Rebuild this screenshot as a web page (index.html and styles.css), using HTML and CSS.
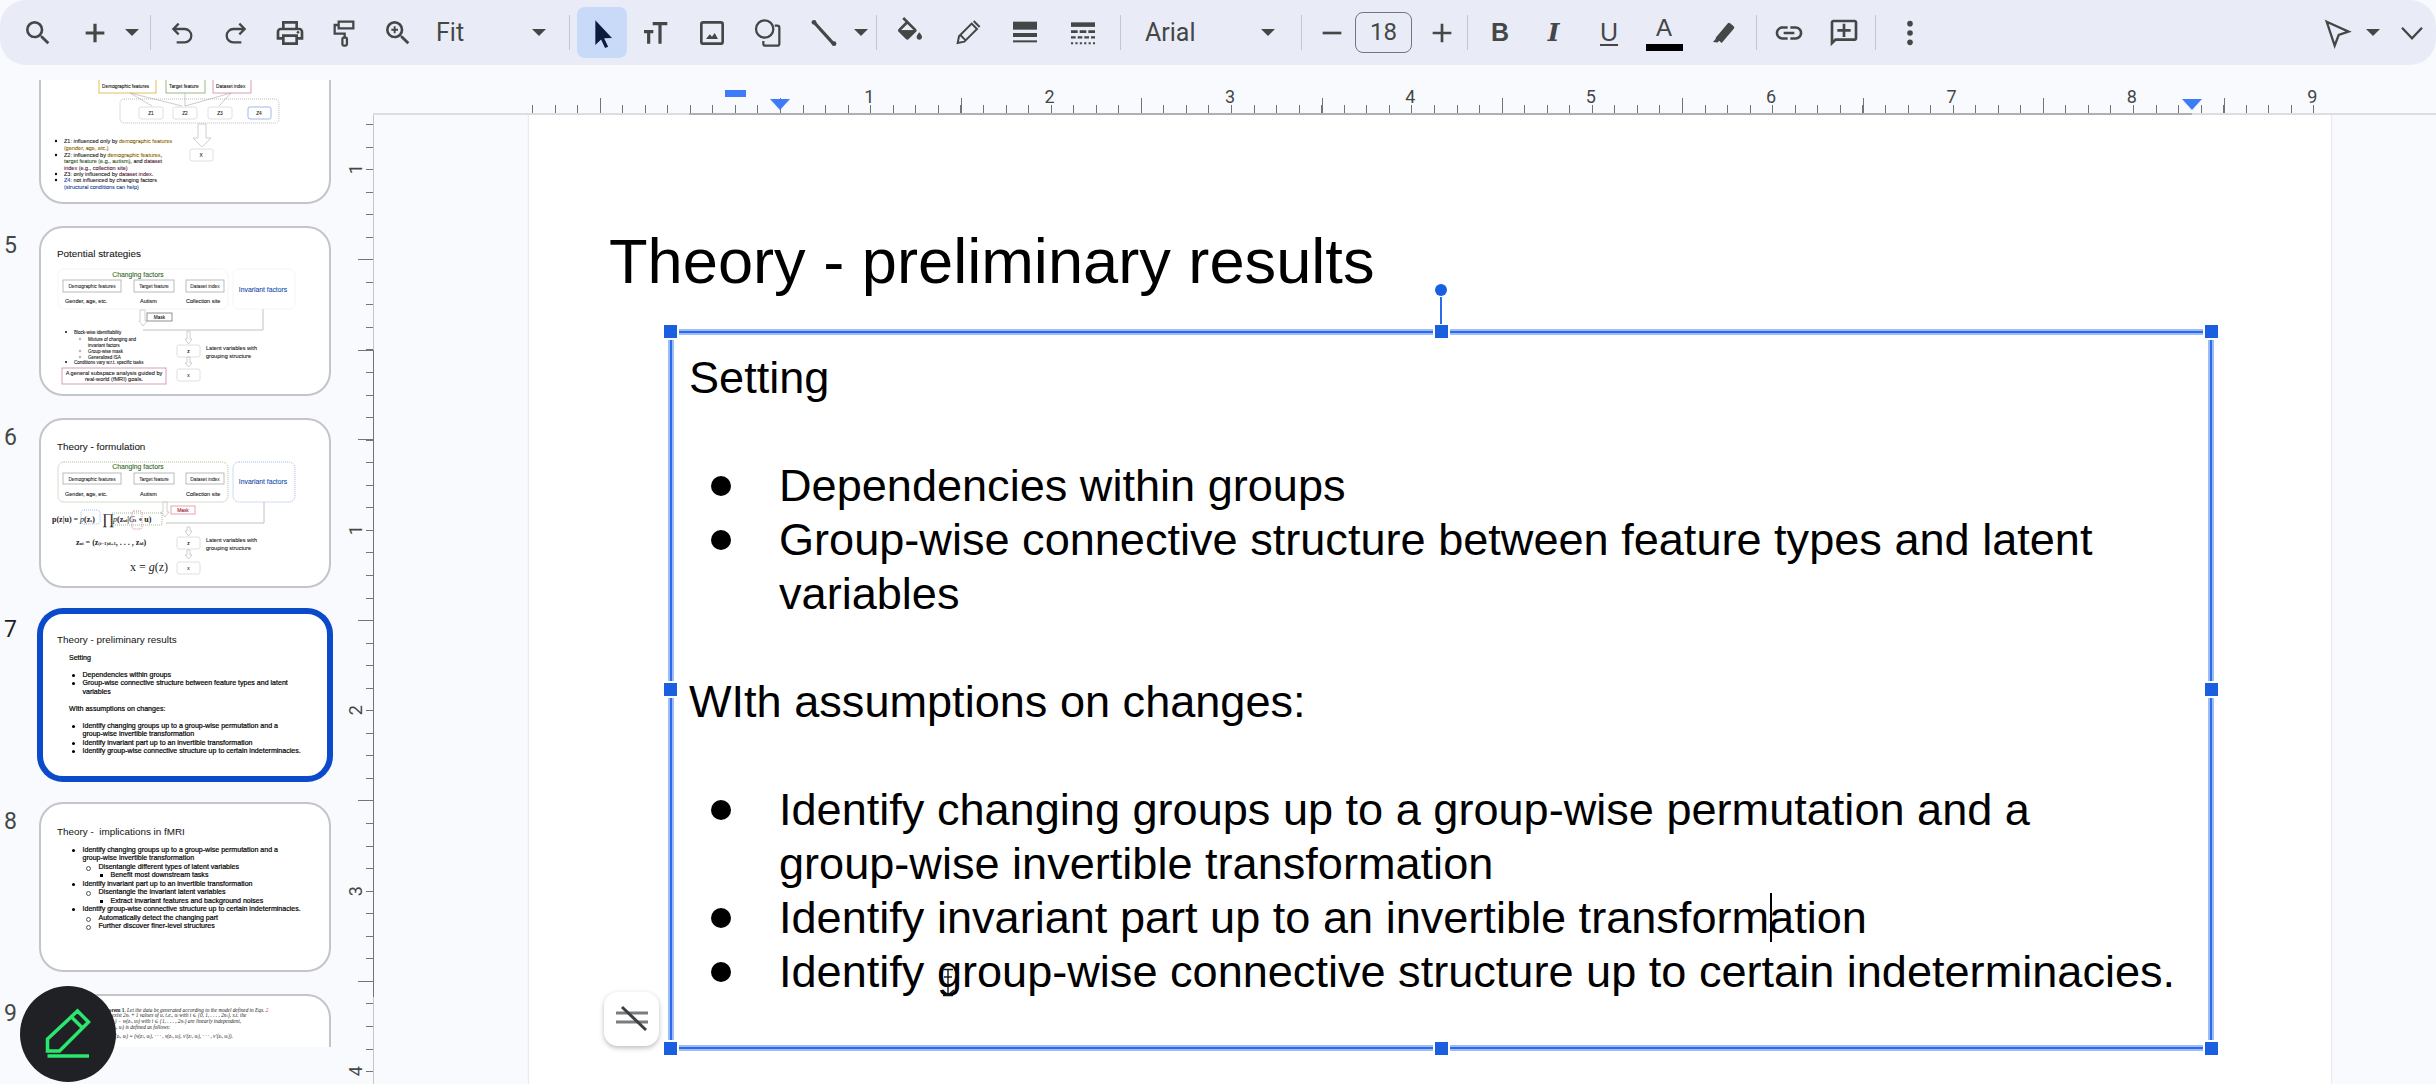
FILE: index.html
```html
<!DOCTYPE html>
<html lang="en">
<head>
    <meta charset="UTF-8">
    <title>Theory - preliminary results</title>
    <link rel="stylesheet" href="styles.css">
</head>
<body>
<div class="app">
    <!-- toolbar -->
    <div class="toolbar">
        <div class="btn w54"><svg class="ico" viewBox="0 0 24 24"><path d="M15.5 14h-.79l-.28-.27A6.471 6.471 0 0 0 16 9.5 6.5 6.5 0 1 0 9.5 16c1.61 0 3.09-.59 4.23-1.57l.27.28v.79l5 4.99L20.49 19l-4.99-5zm-6 0C7.01 14 5 11.99 5 9.5S7.01 5 9.5 5 14 7.01 14 9.5 11.99 14 9.5 14z"/></svg></div>
        <div class="btn w54 ml3"><svg class="ico" viewBox="0 0 24 24"><path d="M19 13.2h-5.8V19h-2.4v-5.8H5v-2.4h5.8V5h2.4v5.8H19z"/></svg></div>
        <div class="btn w20"><span class="caret"></span></div>
        <div class="sep ml8 mr4"></div>
        <div class="btn w54"><svg class="ico line" viewBox="0 0 24 24"><path d="M9.5 5 5.5 9l4 4M5.5 9H14a5 5 0 0 1 0 10H8"/></svg></div>
        <div class="btn w54"><svg class="ico line" viewBox="0 0 24 24"><path d="M14.500 5l4 4-4 4M18.500 9H10a5 5 0 0 0 0 10h6"/></svg></div>
        <div class="btn w54"><svg class="ico" viewBox="0 0 24 24"><path d="M19 8h-1V3H6v5H5c-1.66 0-3 1.34-3 3v6h4v4h12v-4h4v-6c0-1.66-1.34-3-3-3zM8 5h8v3H8V5zm8 12v2H8v-4h8v2zm2-2v-2H6v2H4v-4c0-.55.45-1 1-1h14c.55 0 1 .45 1 1v4h-2z"/><circle cx="18" cy="11.500" r="1"/></svg></div>
        <div class="btn w54"><svg class="ico line" viewBox="0 0 24 24"><path d="M8 3.500h11v5H8zM8 6H5v6.500h7.500v3"/><rect x="10.800" y="15.500" width="3.400" height="6" rx="1"/></svg></div>
        <div class="btn w54"><svg class="ico" viewBox="0 0 24 24"><path d="M15.500 14h-.79l-.28-.27A6.471 6.471 0 0 0 16 9.500 6.500 6.500 0 1 0 9.500 16c1.610 0 3.090-.59 4.230-1.570l.27.28v.79l5 4.990L20.490 19l-4.990-5zm-6 0C7.010 14 5 11.990 5 9.500S7.010 5 9.500 5 14 7.010 14 9.500 11.990 14 9.500 14z"/><path d="M12 10.300h-1.800v1.800H8.800v-1.800H7V8.800h1.800V7h1.400v1.800H12z"/></svg></div>
        <div class="select select-zoom"><span>Fit</span><span class="caret"></span></div>
        <div class="sep ml20 mr7"></div>
        <div class="btn w50 active"><svg class="ico" viewBox="0 0 24 24"><path class="pointer" d="M7 2.500v18.500l4.300-4.200 3 6.500 2.300-1-3-6.400 5.900-.2z"/></svg></div>
        <div class="btn w58"><svg class="ico line thick" viewBox="0 0 24 24"><path d="M9.500 5h11M15 5v15M3 11h7M6.500 11v9"/></svg></div>
        <div class="btn w54"><svg class="ico" viewBox="0 0 24 24"><path d="M5.500 3h13A2.500 2.500 0 0 1 21 5.500v13a2.500 2.500 0 0 1-2.500 2.500h-13A2.500 2.500 0 0 1 3 18.500v-13A2.500 2.500 0 0 1 5.500 3zm0 2a.5.500 0 0 0-.5.5v13a.5.500 0 0 0 .5.500h13a.5.500 0 0 0 .5-.5v-13a.5.500 0 0 0-.5-.5z"/><path d="M7.500 16.500l2.800-3.600 1.700 2 2-2.900 2.500 4.500z"/></svg></div>
        <div class="btn w58"><svg class="ico line" viewBox="0 0 24 24"><circle cx="9.500" cy="9" r="6.500"/><path d="M17 6.500h2a1.500 1.500 0 0 1 1.500 1.500v12a1.500 1.500 0 0 1-1.500 1.500h-9A1.500 1.500 0 0 1 8.500 20v-2"/></svg></div>
        <div class="btn w54"><svg class="ico line thick" viewBox="0 0 24 24"><path d="M5 4.500 19 20"/><circle class="solid" cx="4.500" cy="4" r="1.800"/><circle class="solid" cx="19.500" cy="20" r="1.800"/></svg></div>
        <div class="btn w20"><span class="caret"></span></div>
        <div class="sep ml5 mr5"></div>
        <div class="btn w56"><svg class="ico" viewBox="0 0 24 24"><path d="M16.560 8.940 7.620 0 6.210 1.410l2.380 2.380-5.150 5.150c-.59.59-.59 1.540 0 2.120l5.500 5.500c.29.29.68.44 1.060.44s.77-.15 1.060-.44l5.500-5.500c.59-.58.59-1.530 0-2.120zM5.210 10 10 5.210 14.790 10H5.210zM19 11.500s-2 2.170-2 3.500c0 1.100.9 2 2 2s2-.9 2-2c0-1.330-2-3.500-2-3.500z"/><path d="M4.500 10h11L10 15.800z"/></svg></div>
        <div class="btn w58"><svg class="ico line thin" viewBox="0 0 24 24"><path d="M5 19.500l1-5L15.500 5l4 4L10 18.500zM7 13.500l3.500 3.500M17 3l4.500 4.500"/></svg></div>
        <div class="btn w58"><svg class="ico" viewBox="0 0 24 24"><rect x="3" y="3.500" width="18" height="6"/><rect x="3" y="12" width="18" height="3"/><rect x="3" y="17.500" width="18" height="1.500"/></svg></div>
        <div class="btn w58"><svg class="ico" viewBox="0 0 24 24"><rect x="3" y="4" width="18" height="3.400"/><path d="M3 10h5v2H3zm6.500 0h5v2h-5zM16 10h5v2h-5zM3 14.500h3.500v1.600H3zm5 0h3.500v1.600H8zm5 0h3.500v1.600H13zm5 0h3v1.600h-3zM3 19h1.600v1.500H3zm3.300 0h1.600v1.500H6.300zm3.300 0h1.600v1.500H9.600zm3.300 0h1.600v1.500h-1.600zm3.300 0h1.600v1.500h-1.600zm3.300 0H21v1.500h-1.500z"/></svg></div>
        <div class="sep ml8"></div>
        <div class="select select-font"><span>Arial</span><span class="caret"></span></div>
        <div class="sep ml23 mr6"></div>
        <div class="btn w47"><svg class="ico" viewBox="0 0 24 24"><rect x="5" y="11" width="14" height="2"/></svg></div>
        <div class="size-box">18</div>
        <div class="btn w50 ml5"><svg class="ico" viewBox="0 0 24 24"><path d="M19 13h-6v6h-2v-6H5v-2h6V5h2v6h6z"/></svg></div>
        <div class="sep mr5"></div>
        <div class="btn w54 fmt fmt-b">B</div>
        <div class="btn w53 fmt fmt-i">I</div>
        <div class="btn w58 fmt fmt-u">U</div>
        <div class="btn w52 fmt-a"><span>A</span><i></i></div>
        <div class="btn w66"><svg class="ico" viewBox="0 0 24 24"><path d="M6.500 15.500 15.500 4.800a1.300 1.300 0 0 1 1.800-.1l2.700 2.300a1.300 1.300 0 0 1 .1 1.800L11 19.500l-2-1.600-1 1.200-3.500-.3 2.100-2.400z"/></svg></div>
        <div class="sep"></div>
        <div class="btn w64"><svg class="ico" viewBox="0 0 24 24"><path d="M3.900 12c0-1.710 1.390-3.100 3.100-3.100h4V7H7c-2.760 0-5 2.240-5 5s2.240 5 5 5h4v-1.900H7c-1.710 0-3.100-1.390-3.100-3.100zM8 13h8v-2H8zm9-6h-4v1.900h4c1.710 0 3.100 1.390 3.100 3.100s-1.390 3.100-3.100 3.100h-4V17h4c2.760 0 5-2.240 5-5s-2.240-5-5-5z"/></svg></div>
        <div class="btn w46"><svg class="ico" viewBox="0 0 24 24"><path d="M2 4c0-1.100.9-2 2-2h16c1.100 0 2 .9 2 2v12c0 1.100-.9 2-2 2H6l-4 4zm2 13.170L5.170 16H20V4H4zM11 5h2v4h4v2h-4v4h-2v-4H7V9h4z"/></svg></div>
        <div class="sep ml8"></div>
        <div class="btn w68"><svg class="ico" viewBox="0 0 24 24"><circle cx="12" cy="5" r="2.100"/><circle cx="12" cy="12" r="2.100"/><circle cx="12" cy="19" r="2.100"/></svg></div>
        <div class="tb-right">
            <div class="btn w54"><svg class="ico line" viewBox="0 0 24 24"><path d="M5 3.500 21.500 11l-7.500 2.500-3 8z"/></svg></div>
            <div class="btn w20"><span class="caret"></span></div>
            <div class="btn w24 ml17"><svg class="ico line" viewBox="0 0 24 24"><path d="M4.500 8 12 16l7.500-8"/></svg></div>
        </div>
    </div>

    <div class="workspace">
        <!-- slide list -->
        <div class="filmstrip">
            <div class="film-list">
                <div class="film-row">
                    <div class="film-num"></div>
                    <div class="thumb">
                        <svg class="thumb-svg" viewBox="39 34 292 170">
                            <rect class="bx-gold" x="99" y="70" width="57" height="23"/>
                            <text class="tx t5" x="102" y="87.500">Demographic features</text>
                            <rect class="bx-green" x="166" y="70" width="39" height="23"/>
                            <text class="tx t5" x="169" y="87.500">Target feature</text>
                            <rect class="bx-pink" x="213" y="70" width="38" height="23"/>
                            <text class="tx t5" x="216" y="87.500">Dataset index</text>
                            <path class="ln" d="M130 93 152 106M130 93 182 106M185 93 185 106M231 93 185 106M231 93 219 106"/>
                            <rect class="bx-dot" x="120" y="99" width="159" height="24" rx="4"/>
                            <rect class="bx-soft" x="139" y="107" width="24" height="12" rx="2"/><text class="tx t5" x="151" y="114.500" text-anchor="middle">Z1</text>
                            <rect class="bx-soft" x="173" y="107" width="24" height="12" rx="2"/><text class="tx t5" x="185" y="114.500" text-anchor="middle">Z2</text>
                            <rect class="bx-soft" x="208" y="107" width="24" height="12" rx="2"/><text class="tx t5" x="220" y="114.500" text-anchor="middle">Z3</text>
                            <rect class="bx-blue" x="248" y="107" width="23" height="12" rx="2"/><text class="tx t5" x="259" y="114.500" text-anchor="middle">Z4</text>
                            <path class="arrow" d="M198 124h8v14h5l-9 9-9-9h5z"/>
                            <rect class="bx-soft" x="190" y="149" width="23" height="12" rx="2"/><text class="tx t5" x="201" y="157" text-anchor="middle">X</text>
                            <circle cx="56" cy="141" r="1.200"/><text class="tx t55" x="64" y="143">Z1: influenced only by <tspan class="c-gold">demographic features</tspan></text>
                            <text class="tx t55 c-gold" x="64" y="150">(gender, age, etc.)</text>
                            <circle cx="56" cy="155" r="1.200"/><text class="tx t55" x="64" y="157">Z2: influenced by <tspan class="c-gold">demographic features</tspan>,</text>
                            <text class="tx t55" x="64" y="163"><tspan class="c-green">target feature (e.g., autism)</tspan>, and <tspan class="c-plum">dataset</tspan></text>
                            <text class="tx t55 c-plum" x="64" y="170">index (e.g., collection site)</text>
                            <circle cx="56" cy="174" r="1.200"/><text class="tx t55" x="64" y="176">Z3: only influenced by <tspan class="c-plum">dataset index</tspan>.</text>
                            <circle cx="56" cy="180" r="1.200"/><text class="tx t55" x="64" y="182"><tspan class="c-blue">Z4</tspan>: not influenced by changing factors</text>
                            <text class="tx t55 c-blue" x="64" y="189">(structural conditions can help)</text>
                        </svg>
                    </div>
                </div>
                <div class="film-row">
                    <div class="film-num">5</div>
                    <div class="thumb">
                        <svg class="thumb-svg" viewBox="39 226 292 170">
                            <text class="tx t94" x="57" y="257">Potential strategies</text>
                            <rect class="bx-faint" x="58" y="269" width="170" height="40" rx="6"/>
                            <rect class="bx-faint" x="233" y="269" width="62" height="40" rx="6"/>
                            <text class="tx t68 c-green" x="138" y="276.500" text-anchor="middle">Changing factors</text>
                            <text class="tx t68 c-blue" x="263" y="291.500" text-anchor="middle">Invariant factors</text>
                            <rect class="bx-gray" x="63" y="280" width="58" height="12"/><text class="tx t5 c-soft" x="92" y="288" text-anchor="middle">Demographic features</text>
                            <rect class="bx-gray" x="134" y="280" width="40" height="12"/><text class="tx t5 c-soft" x="154" y="288" text-anchor="middle">Target feature</text>
                            <rect class="bx-gray" x="186" y="280" width="38" height="12"/><text class="tx t5 c-soft" x="205" y="288" text-anchor="middle">Dataset index</text>
                            <text class="tx t55" x="65" y="303">Gender, age, etc.</text>
                            <text class="tx t55" x="140" y="303">Autism</text>
                            <text class="tx t55" x="186" y="303">Collection site</text>
                            <path class="arrow" d="M140 310h5v11h2l-4 5-4-5h1z"/>
                            <rect class="bx-dark" x="147" y="313" width="25" height="8"/><text class="tx t5" x="159.500" y="319" text-anchor="middle">Mask</text>
                            <path class="ln-g" d="M263 309v21H143"/>
                            <path class="arrow" d="M187 331h3v8h2l-3.500 5-3.500-5h2z"/>
                            <rect class="bx-soft" x="177" y="345" width="23" height="12" rx="2"/><text class="tx t5" x="188.500" y="353" text-anchor="middle">z</text>
                            <path class="arrow" d="M187 357h3v6h2l-3.500 4-3.500-4h2z"/>
                            <rect class="bx-soft" x="177" y="369" width="23" height="12" rx="2"/><text class="tx t5" x="188.500" y="377" text-anchor="middle">x</text>
                            <text class="tx t56" x="206" y="350">Latent variables with</text>
                            <text class="tx t56" x="206" y="358">grouping structure</text>
                            <circle cx="66" cy="332" r="1"/><text class="tx t45" x="74" y="334">Block-wise identifiability</text>
                            <circle class="hollow" cx="80" cy="339" r=".9"/><text class="tx t45" x="88" y="341">Mixture of changing and</text>
                            <text class="tx t45" x="88" y="347">invariant factors</text>
                            <circle class="hollow" cx="80" cy="351" r=".9"/><text class="tx t45" x="88" y="353">Group-wise mask</text>
                            <circle class="hollow" cx="80" cy="357" r=".9"/><text class="tx t45" x="88" y="359">Generalized ISA</text>
                            <circle cx="66" cy="362" r="1"/><text class="tx t45" x="74" y="364">Conditions vary w.r.t. specific tasks</text>
                            <rect class="bx-pink" x="62" y="368" width="104" height="16"/>
                            <text class="tx t56" x="114" y="375" text-anchor="middle">A general subspace analysis guided by</text>
                            <text class="tx t56" x="114" y="381" text-anchor="middle">real-world (fMRI) goals.</text>
                        </svg>
                    </div>
                </div>
                <div class="film-row">
                    <div class="film-num">6</div>
                    <div class="thumb">
                        <svg class="thumb-svg" viewBox="39 418 292 170">
                            <text class="tx t94" x="57" y="450">Theory - formulation</text>
                            <rect class="bx-dotg" x="58" y="462" width="170" height="40" rx="6"/>
                            <rect class="bx-dotb" x="233" y="462" width="62" height="40" rx="6"/>
                            <text class="tx t68 c-green" x="138" y="469" text-anchor="middle">Changing factors</text>
                            <text class="tx t68 c-blue" x="263" y="484" text-anchor="middle">Invariant factors</text>
                            <rect class="bx-gray" x="63" y="473" width="58" height="11"/><text class="tx t5 c-soft" x="92" y="480.500" text-anchor="middle">Demographic features</text>
                            <rect class="bx-gray" x="134" y="473" width="40" height="11"/><text class="tx t5 c-soft" x="154" y="480.500" text-anchor="middle">Target feature</text>
                            <rect class="bx-gray" x="186" y="473" width="38" height="11"/><text class="tx t5 c-soft" x="205" y="480.500" text-anchor="middle">Dataset index</text>
                            <text class="tx t55" x="65" y="496">Gender, age, etc.</text>
                            <text class="tx t55" x="140" y="496">Autism</text>
                            <text class="tx t55" x="186" y="496">Collection site</text>
                            <path class="arrow" d="M163 502h4v10h2l-4 5-4-5h2z"/>
                            <rect class="bx-red" x="171" y="506" width="24" height="8"/><text class="tx t5 c-red" x="183" y="512" text-anchor="middle">Mask</text>
                            <path class="ln-g" d="M264 502v21H166"/>
                            <text class="sf t7" x="52" y="522">p(z|u) = <tspan class="it">p</tspan>(z<tspan class="sub">s</tspan>)</text>
                            <text class="sf t12" x="102" y="524">∏</text>
                            <text class="sf t7" x="113" y="522"><tspan class="it">p</tspan>(z<tspan class="sub">ui</tspan>|<tspan class="it">G</tspan><tspan class="sub">i</tspan> ∘ u)</text>
                            <rect class="bx-dotb" x="81" y="510" width="19" height="14" rx="3"/>
                            <rect class="bx-dotg" x="112" y="513" width="50" height="12"/>
                            <rect class="bx-dotp" x="132" y="511" width="10" height="18" rx="2"/>
                            <text class="sf t7" x="76" y="545">z<tspan class="sub">ui</tspan> = (z<tspan class="sub">(i−1)d+1</tspan>, . . . , z<tspan class="sub">id</tspan>)</text>
                            <text class="sf t11" x="130" y="571">x = <tspan class="it">g</tspan>(z)</text>
                            <path class="arrow" d="M187 527h3v4h2l-3.500 5-3.500-5h2z"/>
                            <rect class="bx-soft" x="177" y="537" width="23" height="12" rx="2"/><text class="tx t5" x="188.500" y="545" text-anchor="middle">z</text>
                            <path class="arrow" d="M187 550h3v5h2l-3.500 4-3.500-4h2z"/>
                            <rect class="bx-soft" x="177" y="562" width="23" height="12" rx="2"/><text class="tx t5" x="188.500" y="570" text-anchor="middle">x</text>
                            <text class="tx t56" x="206" y="542">Latent variables with</text>
                            <text class="tx t56" x="206" y="550">grouping structure</text>
                        </svg>
                    </div>
                </div>
                <div class="film-row">
                    <div class="film-num num-on">7</div>
                    <div class="thumb thumb-on">
                        <div class="thumb-title">Theory - preliminary results</div>
                        <div class="thumb-body">
                            <p class="gap">Setting</p>
                            <ul class="gap">
                                <li>Dependencies within groups</li>
                                <li>Group-wise connective structure between feature types and latent<br>variables</li>
                            </ul>
                            <p class="gap">WIth assumptions on changes:</p>
                            <ul>
                                <li>Identify changing groups up to a group-wise permutation and a<br>group-wise invertible transformation</li>
                                <li>Identify invariant part up to an invertible transformation</li>
                                <li>Identify group-wise connective structure up to certain indeterminacies.</li>
                            </ul>
                        </div>
                    </div>
                </div>
                <div class="film-row">
                    <div class="film-num">8</div>
                    <div class="thumb">
                        <div class="thumb-title">Theory -&nbsp; implications in fMRI</div>
                        <div class="thumb-body body-8">
                            <ul>
                                <li>Identify changing groups up to a group-wise permutation and a<br>group-wise invertible transformation</li>
                                <li class="l2">Disentangle different types of latent variables</li>
                                <li class="l3">Benefit most downstream tasks</li>
                                <li>Identify invariant part up to an invertible transformation</li>
                                <li class="l2">Disentangle the invariant latent variables</li>
                                <li class="l3">Extract invariant features and background noises</li>
                                <li>Identify group-wise connective structure up to certain indeterminacies.</li>
                                <li class="l2">Automatically detect the changing part</li>
                                <li class="l2">Further discover finer-level structures</li>
                            </ul>
                        </div>
                    </div>
                </div>
                <div class="film-row">
                    <div class="film-num">9</div>
                    <div class="thumb">
                        <svg class="thumb-svg" viewBox="39 997 292 170">
                            <text class="sf t52 it" x="100" y="1014.500"><tspan class="b">Theorem 1.</tspan> Let the data be generated according to the model defined in Eqs. <tspan class="c-red">2</tspan></text>
                            <text class="sf t52 it" x="100" y="1020">there exist 2n<tspan class="sub">s</tspan> + 1 values of u, i.e., u<tspan class="sub">i</tspan> with i ∈ {0, 1, . . . , 2n<tspan class="sub">s</tspan>}, s.t. the</text>
                            <text class="sf t52 it" x="100" y="1026">w(z<tspan class="sub">s</tspan>, u<tspan class="sub">i</tspan>) − w(z<tspan class="sub">s</tspan>, u<tspan class="sub">0</tspan>) with i ∈ {1, . . . , 2n<tspan class="sub">s</tspan>} are linearly independent,</text>
                            <text class="sf t52 it" x="100" y="1031.500">for w(z<tspan class="sub">s</tspan>, u<tspan class="sub">i</tspan>) is defined as follows:</text>
                            <text class="sf t52 it" x="115" y="1041">(z<tspan class="sub">s</tspan>, u<tspan class="sub">i</tspan>) = (v(z<tspan class="sub">1</tspan>, u<tspan class="sub">i</tspan>), · · · , v(z<tspan class="sub">s</tspan>, u<tspan class="sub">i</tspan>), v′(z<tspan class="sub">1</tspan>, u<tspan class="sub">i</tspan>), · · · , v′(z<tspan class="sub">s</tspan>, u<tspan class="sub">i</tspan>)).</text>
                        </svg>
                    </div>
                </div>
            </div>
        </div>

        <div class="editor">
            <!-- top ruler -->
            <div class="h-ruler">
                <div class="h-ticks">
                    <div class="h-labels">
                        <span>1</span><span>2</span><span>3</span><span>4</span><span>5</span><span>6</span><span>7</span><span>8</span><span>9</span>
                    </div>
                </div>
                <i class="mark-rect"></i>
                <i class="mark-tri mark-left"></i>
                <i class="mark-tri mark-right"></i>
            </div>
            <div class="editor-body">
                <!-- side ruler -->
                <div class="v-ruler">
                    <div class="v-labels">
                        <span>1</span><span></span><span>1</span><span>2</span><span>3</span><span>4</span>
                    </div>
                </div>
                <div class="stage">
                    <div class="slide">
                        <h1 class="slide-title">Theory - preliminary results</h1>
                        <div class="textbox">
                            <p class="para-gap">Setting</p>
                            <ul class="para-gap">
                                <li>Dependencies within groups</li>
                                <li>Group-wise connective structure between feature types and latent<br>variables</li>
                            </ul>
                            <p class="para-gap">WIth assumptions on changes:</p>
                            <ul>
                                <li>Identify changing groups up to a group-wise permutation and a<br>group-wise invertible transformation</li>
                                <li>Identify invariant part up to an invertible transformation</li>
                                <li>Identify group-wise connective structure up to certain indeterminacies.</li>
                            </ul>
                            <i class="handle h-tl"></i><i class="handle h-tc"></i><i class="handle h-tr"></i>
                            <i class="handle h-ml"></i><i class="handle h-mr"></i>
                            <i class="handle h-bl"></i><i class="handle h-bc"></i><i class="handle h-br"></i>
                            <i class="rotate-stem"></i><i class="rotate-dot"></i>
                        </div>
                        <i class="text-caret"></i>
                        <svg class="ibeam" viewBox="0 0 16 30"><path d="M3 1.500h10M8 1.500v26M3 27.500h10M2 22l6 5 6-5"/><path d="M4 9h8"/></svg>
                        <div class="wrap-btn">
                            <svg viewBox="0 0 55 54"><path class="wrap-lines" d="M12 21h32M12 30h32"/><path class="wrap-slash" d="M18 15l24 23"/></svg>
                        </div>
                    </div>
                </div>
            </div>
        </div>
    </div>

    <!-- floating pen -->
    <div class="fab">
        <svg viewBox="0 0 96 96"><path d="M27.500 53 57.500 25l11 11-29 29h-12zM51.500 31l10.500 10.500M27.500 70H69"/></svg>
    </div>
</div>
</body>
</html>
```

FILE: styles.css
```css
* {
    box-sizing: border-box;
}
html, body {
    margin: 0;
    padding: 0;
}
body {
    background-color: #f9fafe;
    font-family: "Liberation Sans", Arial, sans-serif;
}
.app {
    position: relative;
    width: 2436px;
    height: 1084px;
    overflow: hidden;
    display: flex;
    flex-direction: column;
}

/* toolbar */
.toolbar {
    flex: none;
    height: 65px;
    display: flex;
    align-items: center;
    padding: 0 12px 0 11px;
    background-color: #e9ecf7;
    border-radius: 26px;
    color: #444746;
    font-family: Roboto, sans-serif;
}
.btn {
    flex: none;
    height: 51px;
    display: flex;
    align-items: center;
    justify-content: center;
}
.w20 { width: 20px; }
.w24 { width: 24px; }
.w46 { width: 46px; }
.w47 { width: 47px; }
.w50 { width: 50px; }
.w52 { width: 52px; }
.w53 { width: 53px; }
.w54 { width: 54px; }
.w56 { width: 56px; }
.w58 { width: 58px; }
.w64 { width: 64px; }
.w66 { width: 66px; }
.w68 { width: 68px; }
.ml3 { margin-left: 3px; }
.ml5 { margin-left: 5px; }
.ml8 { margin-left: 8px; }
.ml17 { margin-left: 17px; }
.ml20 { margin-left: 20px; }
.ml23 { margin-left: 23px; }
.mr4 { margin-right: 4px; }
.mr5 { margin-right: 5px; }
.mr6 { margin-right: 6px; }
.mr7 { margin-right: 7px; }
.ico {
    flex: none;
    width: 32px;
    height: 32px;
    fill: #444746;
}
.ico.line {
    fill: none;
    stroke: #444746;
    stroke-width: 1.7;
}
.ico.thick {
    stroke-width: 2.4;
}
.ico.thin {
    stroke-width: 1.5;
}
.ico .solid {
    fill: #444746;
    stroke: none;
}
.pointer {
    fill: #0b1d3f;
}
.active {
    background-color: #c9d9f8;
    border-radius: 8px;
}
.caret {
    flex: none;
    width: 0;
    height: 0;
    border-left: 7px solid transparent;
    border-right: 7px solid transparent;
    border-top: 7px solid #444746;
}
.sep {
    flex: none;
    width: 1px;
    height: 35px;
    background-color: #c4c7d0;
}
.select {
    flex: none;
    display: flex;
    align-items: center;
    justify-content: space-between;
    padding-right: 3px;
    font-size: 25px;
}
.select-zoom {
    width: 124px;
    padding-left: 11px;
}
.select-font {
    width: 157px;
    padding-left: 24px;
}
.size-box {
    flex: none;
    width: 57px;
    height: 41px;
    line-height: 39px;
    text-align: center;
    font-size: 24px;
    border: 1px solid #747775;
    border-radius: 8px;
}
.fmt {
    font-size: 25px;
    font-weight: bold;
    font-family: "Liberation Sans", sans-serif;
}
.fmt-i {
    font-family: "DejaVu Serif", serif;
    font-style: italic;
    font-size: 25px;
}
.fmt-u {
    font-weight: normal;
    text-decoration: underline;
    text-decoration-thickness: 2px;
    text-underline-offset: 3px;
}
.fmt-a {
    flex-direction: column;
    font-family: "Liberation Sans", sans-serif;
    font-size: 24px;
    line-height: 26px;
}
.fmt-a i {
    display: block;
    width: 37px;
    height: 7px;
    margin-top: 3px;
    background-color: #000;
}
.tb-right {
    margin-left: auto;
    display: flex;
    align-items: center;
}

/* slide list */
.workspace {
    flex: 1;
    min-height: 0;
    display: flex;
}
.filmstrip {
    flex: none;
    width: 345px;
    padding-top: 15px;
}
.film-list {
    height: 967px;
    overflow: hidden;
}
.film-row {
    display: flex;
    height: 192px;
}
.film-row:first-child {
    margin-top: -46px;
}
.film-num {
    flex: none;
    width: 39px;
    padding: 6px 0 0 4px;
    font-family: Roboto, sans-serif;
    font-size: 23px;
    line-height: 28px;
    color: #444746;
}
.num-on {
    color: #1f1f1f;
}
.thumb {
    flex: none;
    width: 292px;
    height: 170px;
    background-color: #fff;
    border: 2px solid #c3c5c8;
    border-radius: 24px;
    overflow: hidden;
}
.thumb-on {
    border: 4px solid #0b4acb;
    box-shadow: 0 0 0 2px #0b4acb;
}
.thumb-svg {
    display: block;
    width: 292px;
    height: 170px;
    margin: -2px;
}
.thumb-title {
    margin: 22px 0 0 16px;
    font-size: 9.900px;
    line-height: 12px;
    color: #111;
}
.thumb-on .thumb-title {
    margin: 20px 0 0 14px;
}
.thumb-body {
    margin-top: 7.500px;
    font-size: 7.050px;
    line-height: 8.500px;
    color: #000;
    -webkit-text-stroke: .2px #000;
}
.thumb-body.body-8 {
    margin-top: 7.500px;
}
.thumb-body p {
    margin: 0 0 0 28px;
}
.thumb-on .thumb-body p {
    margin-left: 26px;
}
.thumb-body ul {
    margin: 0;
    padding: 0;
    list-style: none;
}
.thumb-body li {
    display: flex;
    padding-left: 31px;
    white-space: nowrap;
}
.thumb-on .thumb-body li {
    padding-left: 29px;
}
.thumb-body li::before {
    content: "";
    flex: none;
    width: 3px;
    height: 3px;
    margin: 3px 7.500px 0 0;
    border-radius: 50%;
    background-color: #000;
}
.thumb-body li.l2 {
    padding-left: 45px;
}
.thumb-body li.l2::before {
    background: none;
    border: .5px solid #555;
}
.thumb-body li.l3 {
    padding-left: 59px;
}
.thumb-body li.l3::before {
    border-radius: 0;
}
.thumb-body .gap {
    margin-bottom: 8.500px;
}

/* thumbnail drawing */
.thumb-svg circle {
    fill: #111;
}
.thumb-svg circle.hollow {
    fill: none;
    stroke: #444;
    stroke-width: .4;
}
.thumb-svg rect {
    fill: none;
    stroke-width: .8;
}
.tx {
    font-family: "Liberation Sans", sans-serif;
    fill: #222;
    stroke: currentColor;
    stroke-width: .08;
}
.sf {
    font-family: "Liberation Serif", "DejaVu Serif", serif;
    fill: #222;
}
.t45 { font-size: 4.500px; }
.t5 { font-size: 4.800px; }
.t52 { font-size: 5.300px; }
.t55 { font-size: 5.500px; }
.t56 { font-size: 5.600px; }
.t68 { font-size: 6.800px; }
.t7 { font-size: 8px; font-weight: bold; }
.t11 { font-size: 12px; }
.t12 { font-size: 15px; }
.t94 { font-size: 9.900px; }
.it { font-style: italic; font-weight: normal; }
.b { font-weight: bold; font-style: normal; }
.sub { font-size: 60%; }
.c-gold { fill: #bf9000; }
.c-green { fill: #38761d; }
.c-plum { fill: #741b47; }
.c-blue { fill: #1155cc; }
.c-red { fill: #d9183b; }
.c-soft { fill: #444; }
.thumb-svg .bx-gold { stroke: #d6ae3c; }
.thumb-svg .bx-green { stroke: #7fa86d; }
.thumb-svg .bx-pink { stroke: #c98ba4; }
.thumb-svg .bx-blue { stroke: #86a7e8; }
.thumb-svg .bx-dot { stroke: #aaa; stroke-dasharray: 1 1; }
.thumb-svg .bx-soft { stroke: #d8d8d8; }
.thumb-svg .bx-faint { stroke: #f2f2f2; }
.thumb-svg .bx-gray { stroke: #aaa; }
.thumb-svg .bx-dark { stroke: #777; }
.thumb-svg .bx-red { stroke: #e58a9b; }
.thumb-svg .bx-dotg { stroke: #8fae82; stroke-dasharray: 1 1; }
.thumb-svg .bx-dotb { stroke: #8aa6e6; stroke-dasharray: 1 1; }
.thumb-svg .bx-dotp { stroke: #c9607f; stroke-dasharray: 1 1; }
.ln, .ln-g {
    fill: none;
    stroke: #aaa;
    stroke-width: .6;
}
.ln-g {
    stroke: #bbb;
    stroke-width: .9;
}
.arrow {
    fill: #fff;
    stroke: #c4c4c4;
    stroke-width: .8;
}

/* rulers */
.editor {
    flex: 1;
    min-width: 0;
    display: flex;
    flex-direction: column;
}
.h-ruler {
    position: relative;
    flex: none;
    height: 50px;
}
.h-ruler::before {
    content: "";
    position: absolute;
    left: 28px;
    right: 0;
    bottom: 0;
    height: 2px;
    background-color: #dcdde0;
}
.h-ruler::after {
    content: "";
    position: absolute;
    left: 344px;
    bottom: 0;
    width: 1503px;
    height: 2px;
    background-color: #aeb0b3;
}
.h-ticks {
    position: relative;
    width: 1803px;
    height: 48px;
    margin-left: 187px;
    background-image:
        repeating-linear-gradient(to right, #70757a 0 1px, transparent 1px 22.550px),
        repeating-linear-gradient(to right, transparent 0 68px, #70757a 68px 69px, transparent 69px 180.400px);
    background-size: 100% 8px, 100% 15px;
    background-position: left bottom;
    background-repeat: no-repeat;
}
.h-labels {
    display: flex;
    padding-top: 22px;
    margin-left: 247px;
    color: #444746;
    font-family: Roboto, sans-serif;
    font-size: 18px;
    line-height: 20px;
}
.h-labels span {
    flex: none;
    width: 180.400px;
    text-align: center;
}
.mark-rect {
    position: absolute;
    left: 380px;
    top: 25px;
    width: 21px;
    height: 7px;
    background-color: #3d7bf8;
}
.mark-tri {
    position: absolute;
    top: 34px;
    width: 0;
    height: 0;
    border-left: 10px solid transparent;
    border-right: 10px solid transparent;
    border-top: 11px solid #3d7bf8;
}
.mark-left { left: 425px; }
.mark-right { left: 1837px; }

.editor-body {
    flex: 1;
    min-height: 0;
    display: flex;
}
.v-ruler {
    flex: none;
    width: 29px;
    background-image:
        linear-gradient(#70757a, #70757a),
        linear-gradient(#c4c7c5, #c4c7c5),
        repeating-linear-gradient(to bottom, transparent 0 9px, #70757a 9px 10px, transparent 10px 22.550px),
        repeating-linear-gradient(to bottom, transparent 0 144px, #70757a 144px 145px, transparent 145px 180.400px),
        linear-gradient(#70757a, #70757a);
    background-size: 1px 647px, 1px 100%, 7px 100%, 15px 100%, 15px 1px;
    background-position: right 0 top 235px, right 0 top 0, right 1px top 0, right 1px top 0, right 1px top 235px;
    background-repeat: no-repeat;
}
.v-labels {
    display: flex;
    flex-direction: column;
    margin-top: -36px;
    color: #444746;
    font-family: Roboto, sans-serif;
    font-size: 18px;
    line-height: 20px;
    width: 22px;
}
.v-labels span {
    flex: none;
    height: 180.400px;
    display: flex;
    align-items: center;
    justify-content: center;
    transform: rotate(-90deg);
}

/* slide canvas */
.stage {
    flex: 1;
    min-width: 0;
    overflow: hidden;
    background-color: #f9fafe;
    padding-left: 155px;
}
.slide {
    position: relative;
    width: 1802px;
    height: 1100px;
    background-color: #fff;
    box-shadow: 0 0 2px rgba(60, 64, 67, .25);
    color: #000;
}
.slide-title {
    position: absolute;
    left: 80px;
    top: 111px;
    margin: 0;
    font-size: 63.200px;
    line-height: 70px;
    font-weight: normal;
    white-space: nowrap;
}
.textbox {
    position: absolute;
    left: 141px;
    top: 216px;
    width: 1542px;
    height: 718px;
    padding: 18px 0 0 17px;
    border: 2px solid #2a6bea;
    box-shadow: 0 0 0 2px #9dbcf8, inset 0 0 0 2px #9dbcf8;
    font-size: 45.100px;
    line-height: 54px;
    white-space: nowrap;
}
.textbox p {
    margin: 0;
}
.textbox ul {
    margin: 0;
    padding: 0;
    list-style: none;
}
.textbox li {
    display: flex;
}
.textbox li::before {
    content: "";
    flex: none;
    width: 20px;
    height: 20px;
    margin: 17px 48px 0 22px;
    border-radius: 50%;
    background-color: #000;
}
.textbox .para-gap {
    margin-bottom: 54px;
}
.handle {
    position: absolute;
    width: 13px;
    height: 13px;
    background-color: #1a5fe0;
    outline: 2px solid #fff;
}
.h-tl { left: -8px; top: -8px; }
.h-tc { left: 762.500px; top: -8px; }
.h-tr { right: -8px; top: -8px; }
.h-ml { left: -8px; top: 350px; }
.h-mr { right: -8px; top: 350px; }
.h-bl { left: -8px; bottom: -8px; }
.h-bc { left: 762.500px; bottom: -8px; }
.h-br { right: -8px; bottom: -8px; }
.rotate-stem {
    position: absolute;
    left: 768px;
    top: -36px;
    width: 2px;
    height: 27px;
    background-color: #2a6bea;
}
.rotate-dot {
    position: absolute;
    left: 763px;
    top: -49px;
    width: 12px;
    height: 12px;
    border-radius: 50%;
    background-color: #1a5fe0;
}
.text-caret {
    position: absolute;
    left: 1241px;
    top: 778px;
    width: 2px;
    height: 49px;
    background-color: #000;
}
.ibeam {
    position: absolute;
    left: 411px;
    top: 853px;
    width: 16px;
    height: 30px;
    fill: none;
    stroke: #111;
    stroke-width: 1.4;
}
.wrap-btn {
    position: absolute;
    left: 75px;
    top: 877px;
    width: 55px;
    height: 54px;
    background-color: #fff;
    border-radius: 14px;
    box-shadow: 0 2px 5px rgba(60, 64, 67, .35);
}
.wrap-btn svg {
    display: block;
    fill: none;
}
.wrap-lines {
    stroke: #7a7c80;
    stroke-width: 3;
}
.wrap-slash {
    stroke: #3c4043;
    stroke-width: 3;
}

/* floating pen */
.fab {
    position: absolute;
    left: 20px;
    top: 986px;
    width: 96px;
    height: 96px;
    border-radius: 50%;
    background-color: #1f2124;
}
.fab svg {
    display: block;
    fill: none;
    stroke: #2be66f;
    stroke-width: 3.500;
}
```
